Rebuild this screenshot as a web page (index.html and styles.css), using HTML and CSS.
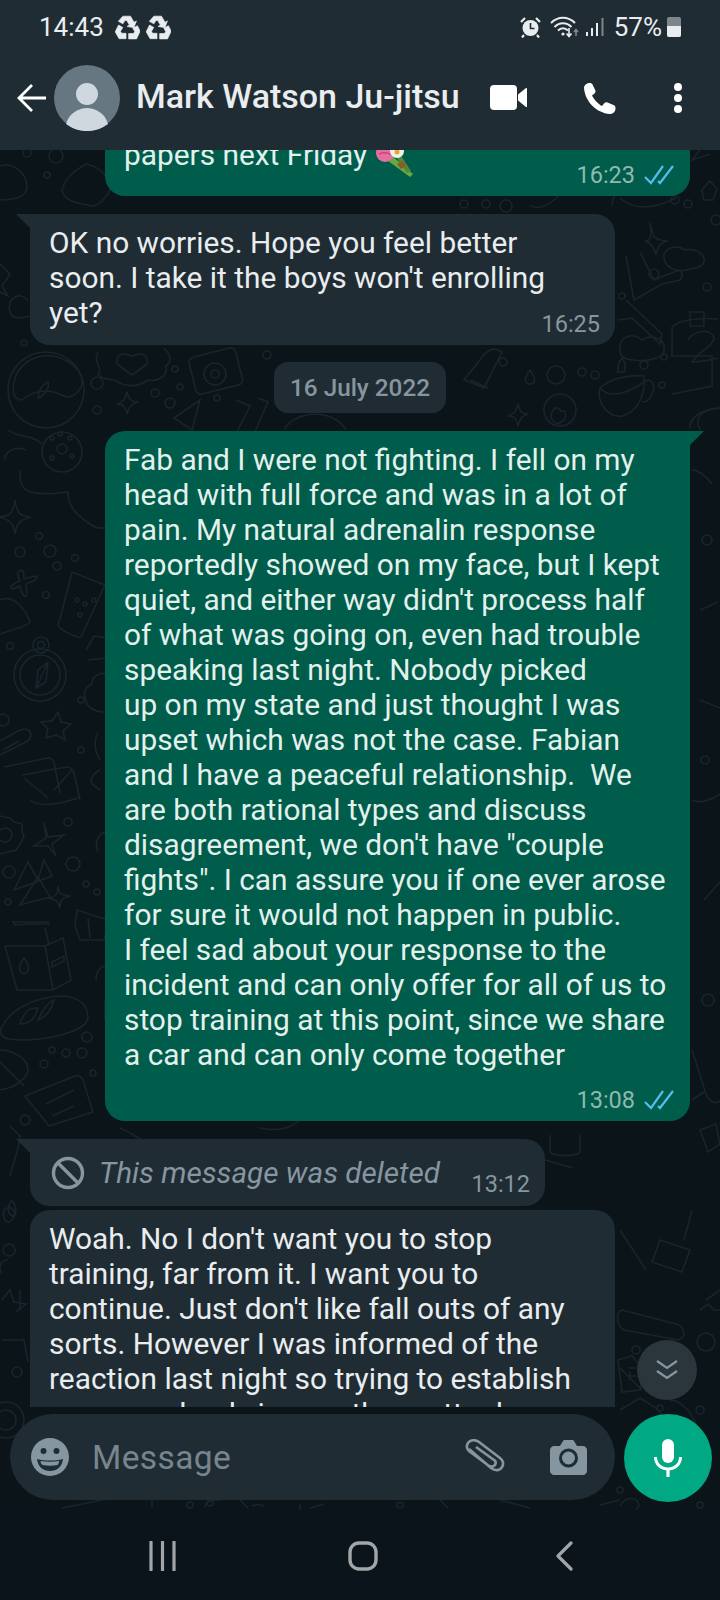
FILE: index.html
```html
<!DOCTYPE html>
<html>
<head>
    <title>Mark Watson Ju-jitsu</title>
    <link rel="stylesheet" href="styles.css">
</head>
<body>
    <svg class="sprites" width="0" height="0">
        <symbol id="recycle" viewBox="0 0 24 24">
            <path d="M8.200 2h7l3.300 5.600 2.200-1.200-2.300 6.200-6.400-1.100 2.200-1.300-2.500-4.300-1.600 0-1.900 3.200-4.200-2.400z"/>
            <path d="M4.200 10.200l3.900 2.200-2.100 3.600 1 1.800h4.100v5h-6.400l-3.400-6 0-.8z"/>
            <path d="M13.500 23v-5h4.600l1-1.800-1.700-3 4.200-2.400 2.400 4.600v.8l-3.200 6.800z"/>
        </symbol>
    </svg>

    <header class="top">
        <div class="status">
            <span class="clock">14:43</span>
            <svg class="ico-recycle"><use href="#recycle"/></svg>
            <svg class="ico-recycle"><use href="#recycle"/></svg>
            <span class="status-gap"></span>
            <svg class="ico-alarm" viewBox="0 0 21 21">
                <circle cx="10.500" cy="11" r="8" fill="#e9edef"/>
                <path d="M10.500 6v5.500h4" fill="none" stroke="#202c33" stroke-width="1.600"/>
                <path d="M1 5l4-4M20 5l-4-4M4 18l-2 2.500M17 18l2 2.500" stroke="#e9edef" stroke-width="2.200" fill="none"/>
            </svg>
            <svg class="ico-wifi" viewBox="0 0 30 22">
                <path d="M1 7c7-7 17-7 24 0M4.500 11c5-5 12-5 17 0M8 14.500c3-3 7-3 10 0" fill="none" stroke="#e9edef" stroke-width="2"/>
                <circle cx="13" cy="18" r="1.600" fill="#e9edef"/>
                <path d="M19 12v8M16.500 17.500l2.500 3 2.500-3" fill="none" stroke="#e9edef" stroke-width="1.600"/>
                <path d="M26 20v-6M24 16l2-2.500 2 2.500" fill="none" stroke="#7c868c" stroke-width="1.600"/>
            </svg>
            <svg class="ico-signal" viewBox="0 0 18 20">
                <path d="M1 15v4M6 11v8M11 6v13" stroke="#e9edef" stroke-width="2" fill="none"/>
                <path d="M16.500 1v18" stroke="#7c868c" stroke-width="2" fill="none"/>
            </svg>
            <span class="battery-text">57%</span>
            <span class="battery"><span class="battery-fill"></span></span>
        </div>
        <div class="title-bar">
            <svg class="ico-back" viewBox="0 0 30 30">
                <path d="M29 15H2M15 2L2 15l13 13" fill="none" stroke="#fff" stroke-width="2.800"/>
            </svg>
            <div class="avatar">
                <svg viewBox="0 0 66 66">
                    <circle cx="33" cy="33" r="33" fill="#667781"/>
                    <circle cx="33" cy="29" r="11" fill="#cfd8de"/>
                    <path d="M12 59c3-11 13-16 21-16s18 5 21 16c-6 4.500-13 7-21 7s-15-2.500-21-7z" fill="#cfd8de"/>
                </svg>
            </div>
            <span class="name">Mark Watson Ju-jitsu</span>
            <svg class="ico-video" viewBox="0 0 37 25">
                <rect x="0" y="0" width="27" height="25" rx="4" fill="#fff"/>
                <path d="M28 9.500l8-6.500c.5-.3 1 0 1 .6v17.800c0 .6-.5.9-1 .6l-8-6.500z" fill="#fff"/>
            </svg>
            <svg class="ico-phone" viewBox="0 0 33 32">
                <path d="M7 1c-3 0-6 2-6 5 1 13 12 25 26 26 3 0 5.500-2.500 5.500-5.500 0-2-.5-3-2-3.500l-6-2.500c-1.500-.5-2.500 0-3.500 1l-2 2.500c-4-2-8-6.500-10-10.500l2.500-2c1-1 1.200-2 .8-3.200L9.500 2.500C9 1.500 8 1 7 1z" fill="#fff"/>
            </svg>
            <div class="dots"><i></i><i></i><i></i></div>
        </div>
    </header>

    <main class="chat">
        <svg class="doodles" viewBox="0 0 720 1360">
            <g transform="translate(0,-150)">
                <!-- under header -->
                <circle cx="27" cy="153" r="4"/><circle cx="56" cy="156" r="7"/>
                <path d="M0 166c12-4 26 6 27 20 0 12-16 14-27 14"/>
                <path d="M62 190c4-14 14-20 24-26 12 2 24 12 24 26-4 8-10 14-16 16-14-2-30-4-32-16z"/>
                <circle cx="47" cy="175" r="3"/>
                <circle cx="464" cy="204" r="4"/><circle cx="486" cy="204" r="4"/><circle cx="506" cy="206" r="6"/>
                <path d="M530 205c10 8 24-4 34-14M612 205c0-6 4-12 8-16M620 198c16 14 36 10 56 0"/>
                <circle cx="675" cy="200" r="4"/><circle cx="688" cy="204" r="4"/>
                <path d="M700 150l-8 10 18-6M702 190l8-9 7 8-4 11-9 0z"/>
                <!-- left of first bubble -->
                <path d="M0 264l10 10-8 12 6 10-8-4"/>
                <path d="M28 300c-10-10-22 0-18 12 2 8 12 6 20 4"/>
                <circle cx="24" cy="343" r="3"/>
                <circle cx="46" cy="390" r="38"/>
                <path d="M14 382c4-18 20-28 38-26 16 2 30 14 30 26 0 8-10 18-18 14-16-8-30-6-42 4-8 0-10-8-8-18z"/>
                <path d="M38 398c0-6 4-14 10-16 2 6-4 14-10 16z"/>
                <circle cx="62" cy="452" r="20"/><circle cx="62" cy="449" r="5"/>
                <circle cx="52" cy="438" r="2"/><circle cx="60" cy="434" r="2"/><circle cx="70" cy="438" r="2"/><circle cx="52" cy="458" r="2"/><circle cx="72" cy="456" r="2"/>
                <path d="M8 430c10 8 24 4 34 14M4 460c2-10 12-14 22-10"/>
                <!-- heart cloud, camera, between bubbles -->
                <path d="M98 352c-6 10 6 16 0 22 6 8 18 4 20 8 10 6 22 4 30-2 10 2 20-4 18-14 8-6 2-14-2-18"/>
                <path d="M132 375l-14-10c-4-8 2-14 14-9 12-5 18 1 14 9z"/>
                <rect x="192" y="352" width="48" height="38" rx="5" transform="rotate(-14 216 372)"/>
                <circle cx="215" cy="374" r="11"/><circle cx="215" cy="374" r="4"/>
                <circle cx="175" cy="369" r="3"/><circle cx="180" cy="387" r="3"/><circle cx="97" cy="383" r="6"/>
                <circle cx="155" cy="393" r="4"/><circle cx="170" cy="403" r="5"/><circle cx="97" cy="410" r="4"/><circle cx="217" cy="398" r="3"/><circle cx="267" cy="355" r="4"/>
                <path d="M127 392c2 8 4 10 12 10-8 2-10 4-12 12-2-8-4-10-10-10 6-2 8-4 10-12z"/>
                <path d="M174 418l26-18-8 30zM236 400l14 6-14 28M258 398l10 4-14 32"/>
                <path d="M284 430c10-20 50-22 62 0"/>
                <path d="M480 360c6-10 14-14 22-8l-18 36-20-8zM470 380l18 8"/>
                <circle cx="503" cy="362" r="4"/><path d="M530 370c-6 8-6 14 0 14s6-6 0-14z"/>
                <circle cx="556" cy="375" r="9"/><circle cx="582" cy="372" r="4"/><circle cx="595" cy="375" r="4"/>
                <path d="M620 350c-2-14 14-18 22-10 8-6 24-2 22 10 0 8-16 12-30 10-8 0-14-2-14-10z"/>
                <path d="M618 372c0-8 0-8 4-14 4 6 4 8 2 14z"/>
                <path d="M600 388c8-8 26-14 44-12 2 18-6 36-22 40-14 2-26-14-22-28zM644 382c8-6 12 4 8 12-2 6-6 8-10 8"/>
                <path d="M600 388c10 12 30 4 44-6"/>
                <path d="M518 404c2 8 4 10 10 10-6 2-8 4-10 12-2-8-4-10-10-10 6-2 8-4 10-12z"/>
                <circle cx="560" cy="410" r="16"/><path d="M552 412c4-8 10-2 8 0 4-4 8 2 4 8l-6 4c-6-2-8-6-6-12z"/>
                <path d="M690 428c0-12 14-20 30-20"/>
                <!-- right of first bubble -->
                <path d="M650 223l4 14c6 4 10 4 14 4-8 2-10 4-12 14-2-8-4-10-10-14 4 0 6-4 4-18z"/>
                <path d="M664 256c0-8 14-12 20-6 8-2 22 2 20 12-2 6-10 6-18 8-10 2-22-2-22-14z"/>
                <path d="M626 256l8 44 28-16 18-4c4-6 2-12-6-8l-20 8-14-28"/>
                <path d="M626 300l36 34-2 10-28-26-14 2"/>
                <circle cx="654" cy="274" r="5"/><circle cx="707" cy="287" r="4"/><circle cx="716" cy="220" r="5"/><circle cx="622" cy="296" r="3"/>
                <path d="M672 327c6-6 24-10 46-8M672 327v30M690 312h14v14h-14z"/>
                <path d="M688 340c6-10 24-12 26-2 0 8-16 14-22 24 10 0 18-2 26-4"/>
                <path d="M672 356h40v30l-40 8"/>
                <circle cx="664" cy="357" r="3"/><circle cx="662" cy="385" r="3"/><circle cx="644" cy="365" r="4"/>
                <path d="M700 430c-6-12 0-20 20-22"/>
                <!-- left column -->
                <path d="M20 470c0 10 0 18 10 22 20 4 30 0 38 0 0 16 10 24 22 32 8 6 16 4 20 2"/>
                <path d="M15 500c2 14 5 16 16 17-11 3-14 5-16 17-2-12-5-14-16-17 11-1 14-3 16-17z"/>
                <circle cx="39" cy="536" r="3.500"/><circle cx="20" cy="552" r="5"/><circle cx="50" cy="551" r="6"/><circle cx="57" cy="566" r="4"/><circle cx="75" cy="558" r="3.500"/><circle cx="46" cy="595" r="3.500"/><circle cx="10" cy="646" r="3.500"/><circle cx="81" cy="700" r="3"/><circle cx="81" cy="750" r="3"/><circle cx="3" cy="720" r="6"/>
                <path d="M19 571c4-2 5 0 5 8 6-2 13-4 13-2s-2 4-11 7c0 6 2 10 0 12s-5-4-6-10c-4 2-8 4-9 2s2-4 9-7c-2-4-3-8-1-10z"/>
                <path d="M72 572l33 13-24 52c-2 2-18-6-22-10-2-2 0-6 1-8z"/>
                <circle cx="77" cy="600" r="2"/><circle cx="85" cy="604" r="2"/><circle cx="94" cy="600" r="2"/><circle cx="80" cy="615" r="2"/>
                <path d="M0 600c14-6 26 10 30 22-2 4-18 8-30 12"/>
                <circle cx="40" cy="675" r="26"/><circle cx="40" cy="675" r="20"/><circle cx="41" cy="645" r="8"/><circle cx="41" cy="645" r="3.500"/>
                <path d="M36 688l12-26-2 20z M36 688l2-18 10-8"/>
                <path d="M58 712l3 10 10 2-8 7 2 9-9-5-10 3 2-9-7-7 11-1z"/>
                <path d="M0 755l26-13c6-3 6-10 2-12-3-2-6-1-10 1L0 741M3 750l16-9"/>
                <path d="M4 767l44-9c3 0 6 2 6 5l6 30M22 775l44-8c4 0 7 2 8 6l6 27M24 778l24 20M72 770l-18 20"/>
                <path d="M100 770c-8 4-10 10-8 14l8 6"/>
                <path d="M86 700c-4-6 0-14 6-16 0-8 8-12 14-10M86 700c0 6 8 12 18 12"/>
                <path d="M86 650l8-14 14 2-2 20-18 2"/>
                <path d="M30 800c10 8 30 4 48-2"/>
                <!-- second left column -->
                <circle cx="5" cy="835" r="7"/>
                <path d="M0 816l10 2 4 4 8 2v8l2 4-4 8-4 6-8 2-8 2"/>
                <path d="M44 823l4 14 16-2-12 9 4 12-8-10-14 0 12-8z"/>
                <circle cx="68" cy="822" r="4"/><circle cx="73" cy="864" r="7"/><circle cx="9" cy="872" r="6"/><circle cx="8" cy="902" r="3"/><circle cx="86" cy="884" r="3"/><circle cx="97" cy="892" r="3"/>
                <path d="M28 862l10 18 6-20 8 16-38 14zM20 905l30-8-12-20z"/>
                <path d="M58 886c1 7 2 9 12 10-8 2-10 4-10 12-2-6-2-8-12-10 8-1 10-4 10-12z"/>
                <path d="M13 922l2 3 14-1h20l-1-2-30 0zM5 946l12 44 36 0 18-10-8-42-18 8-40 0zM45 927l4 18M53 990l-8-45"/>
                <path d="M24 958c-6 8-6 14 0 16 6-2 6-8 0-16zM52 962l12-6 0 5-12 6z"/>
                <path d="M77 910l-2 16 5 14 24 0 5-20-14-4zM88 918l2 20"/>
                <path d="M0 1032c6-20 30-34 60-36 20 0 28 10 28 22-2 12-30 20-60 22-14 0-26 0-28-8zM20 1024c4-12 8-16 18-16-2 8-6 16-18 16zM38 1020c4-10 8-16 16-20-2 8-6 16-16 20z"/>
                <circle cx="87" cy="1037" r="5"/><circle cx="52" cy="1050" r="3"/><circle cx="66" cy="1053" r="4"/><circle cx="82" cy="1053" r="5"/><circle cx="44" cy="1064" r="4"/><circle cx="93" cy="1073" r="3"/><circle cx="25" cy="1120" r="5"/>
                <path d="M0 1050c12 0 28 8 28 20-2 10-14 18-28 20M0 1062l24 24"/>
                <path d="M25 1096l50-20c3-1 6 0 8 4l10 32-44 14zM46 1104l28-14M52 1116l22-10"/>
                <path d="M100 760c-6-10-6-20-2-28M98 852c-4-10 0-18 8-20"/>
                <path d="M105 1000v20M96 980c0-8 4-14 10-14"/>
                <!-- right of big bubble -->
                <path d="M692 470c6 0 14 6 20 14M700 610l18-8M700 700l20 8M692 800c8 4 20 0 28-6M704 900l16-18"/>
                <circle cx="707" cy="540" r="5"/><circle cx="705" cy="760" r="4"/><circle cx="708" cy="1000" r="6"/>
                <path d="M692 1050l14 44c4 10 12 10 14 6M700 1130l16-6 4 20-12 8zM692 1100l12-8"/>
                <!-- between bubbles at the bottom -->
                <path d="M10 1126l10 10c0 10-8 30-10 40M12 1200c-6 8-4 14 0 16s6-8 0-16z"/>
                <path d="M4 1210c8-6 14 2 8 10-6 6-10-2-8-10zM8 1260c-8 0-10 8-6 14M2 1300l8-10 4 12 12 2-10 8"/>
                <circle cx="9" cy="1250" r="6"/><path d="M20 1290v20M2 1340l22 0 4 22"/>
                <circle cx="17" cy="1372" r="5"/><circle cx="6" cy="1420" r="18"/><circle cx="6" cy="1420" r="10"/>
                <path d="M120 1128c10 4 20 12 28 14M260 1128c20 4 30 0 40-8M550 1135v16c0 6 30 6 30 0v-16M545 1160l28 8"/>
                <!-- right of bottom bubbles -->
                <path d="M622 1310l54 14c8 2 12 14 2 16l-54-10c-8-4-8-18-2-20zM706 1300l14-10M620 1368l22 22M630 1372v8"/>
                <circle cx="706" cy="1342" r="9"/><circle cx="636" cy="1350" r="4"/><circle cx="660" cy="1408" r="3"/><circle cx="700" cy="1410" r="4"/>
                <path d="M618 1360l14-4 12 14-4 20-18 2zM628 1368h8M628 1376h8"/>
                <path d="M700 1310l8-6 6 6 6 0M620 1230l26 40M660 1240l30 10-8 22-30-10zM692 1210l-8 30"/>
                <path d="M620 1410l20-12 16 10 12 14-2 14"/>
                <path d="M670 1400c10 0 20 10 26 24"/>
                <!-- under composer -->
                <path d="M62 1508l60-12h20M205 1508c0-6 4-8 12-8l64-6M152 1500v8M252 1506c6-2 8-2 12 0M310 1508l14-4M240 1500l8 8M300 1504v6"/>
                <circle cx="190" cy="1505" r="3"/><circle cx="210" cy="1503" r="3"/><circle cx="400" cy="1505" r="3"/>
                <path d="M440 1500l8 8M500 1500l30 8M600 1505l20-5M620 1506c4-8 14-10 18-4 2 4 0 6-2 8"/>
                <circle cx="620" cy="1490" r="3"/><circle cx="700" cy="1505" r="3"/>
            </g>
        </svg>

        <div class="messages">
            <div class="bubble out first">
                <div class="text">papers next Friday <svg class="bouquet" viewBox="0 0 40 40">
                    <path d="M9 20l6-4 23 20-3 3z" fill="#6aa53f"/>
                    <path d="M18 14l5-1 13 20-4 2z" fill="#4f8a34"/>
                    <path d="M22 26l6-3 3 5-5 3z" fill="#8a5a2c"/>
                    <ellipse cx="10" cy="15" rx="9" ry="9" fill="#e66f9f"/>
                    <path d="M4 16c4-2 8-2 13 1" stroke="#c9477f" stroke-width="1.500" fill="none"/>
                    <circle cx="22" cy="13" r="7" fill="#f1f1ea"/>
                    <circle cx="22" cy="14" r="2.500" fill="#e6a53a"/>
                </svg></div>
                <div class="meta"><span class="time">16:23</span><svg class="ticks" viewBox="0 0 30 22"><path d="M1 13l6 6L19 2M14 17l2 2L29 2" fill="none" stroke="#53bdeb" stroke-width="2.200"/></svg></div>
            </div>

            <div class="bubble in tail">
                <div class="text">OK no worries. Hope you feel better<br>soon. I take it the boys won't enrolling<br>yet?</div>
                <div class="meta meta-in"><span class="time">16:25</span></div>
            </div>

            <div class="date">16 July 2022</div>

            <div class="bubble out tail big">
                <div class="text">Fab and I were not fighting. I fell on my<br>head with full force and was in a lot of<br>pain. My natural adrenalin response<br>reportedly showed on my face, but I kept<br>quiet, and either way didn't process half<br>of what was going on, even had trouble<br>speaking last night. Nobody picked<br>up on my state and just thought I was<br>upset which was not the case. Fabian<br>and I have a peaceful relationship.&nbsp; We<br>are both rational types and discuss<br>disagreement, we don't have "couple<br>fights". I can assure you if one ever arose<br>for sure it would not happen in public.<br>I feel sad about your response to the<br>incident and can only offer for all of us to<br>stop training at this point, since we share<br>a car and can only come together</div>
                <div class="meta"><span class="time">13:08</span><svg class="ticks" viewBox="0 0 30 22"><path d="M1 13l6 6L19 2M14 17l2 2L29 2" fill="none" stroke="#53bdeb" stroke-width="2.200"/></svg></div>
            </div>

            <div class="bubble in tail deleted">
                <svg class="ico-deleted" viewBox="0 0 34 34">
                    <circle cx="17" cy="17" r="14.500" fill="none" stroke="#8696a0" stroke-width="3.400"/>
                    <path d="M7 7l20 20" stroke="#8696a0" stroke-width="3.400"/>
                </svg>
                <span class="deleted-text">This message was deleted</span>
                <span class="time">13:12</span>
            </div>

            <div class="bubble in cut">
                <div class="text">Woah. No I don't want you to stop<br>training, far from it. I want you to<br>continue. Just don't like fall outs of any<br>sorts. However I was informed of the<br>reaction last night so trying to establish<br>a more valued view on the matter here</div>
            </div>
        </div>

        <div class="to-bottom">
            <svg viewBox="0 0 24 22"><path d="M2 2l10 7 10-7M2 12l10 7 10-7" fill="none" stroke="#8696a0" stroke-width="2.200"/></svg>
        </div>

        <div class="composer">
            <div class="input">
                <svg class="ico-smile" viewBox="0 0 38 38">
                    <circle cx="19" cy="19" r="19" fill="#8696a0"/>
                    <circle cx="12.500" cy="13" r="3" fill="#202c33"/>
                    <circle cx="25.500" cy="13" r="3" fill="#202c33"/>
                    <path d="M6 21c8 2 18 2 26 0-1 8-6 12-13 12S7 29 6 21z" fill="#202c33"/>
                    <path d="M9.500 23c6 1 13 1 19 0-1 2-1 3-2 4-5 1-10 1-15 0-1-1-2-2-2-4z" fill="#8696a0"/>
                </svg>
                <span class="placeholder">Message</span>
                <svg class="ico-clip" viewBox="0 0 40 36">
                    <path d="M4 9l22 19c4 3 9 3 11-1 2-3 1-7-2-9L14 2C10-1 5 0 3 3c-2 3-1 6 1 8l20 15c2 1 4 1 6-1 1-2 1-4-1-5L11 7" fill="none" stroke="#8696a0" stroke-width="2.600" transform="translate(0 1)"/>
                </svg>
                <svg class="ico-camera" viewBox="0 0 37 36">
                    <path d="M4 7h6l3-5c.5-.6 1-1 2-1h7c1 0 1.500.4 2 1l3 5h6c2 0 4 2 4 4v21c0 2-2 4-4 4H4c-2 0-4-2-4-4V11c0-2 2-4 4-4z" fill="#8696a0"/>
                    <circle cx="18.500" cy="19" r="8" fill="#8696a0" stroke="#202c33" stroke-width="3"/>
                </svg>
            </div>
            <div class="mic">
                <svg viewBox="0 0 28 38">
                    <rect x="8" y="0" width="12" height="24" rx="6" fill="#fff"/>
                    <path d="M1.500 18c0 7 5.500 12 12.500 12s12.500-5 12.500-12" fill="none" stroke="#fff" stroke-width="3"/>
                    <path d="M14 29v9" stroke="#fff" stroke-width="3.200"/>
                </svg>
            </div>
        </div>
    </main>

    <nav class="nav">
        <svg class="nav-recent" viewBox="0 0 27 30"><path d="M2 1v28M13.500 1v28M25 1v28" stroke="#a3a6a8" stroke-width="3.200" stroke-linecap="round"/></svg>
        <svg class="nav-home" viewBox="0 0 30 30"><rect x="2" y="2" width="26" height="26" rx="9" fill="none" stroke="#a3a6a8" stroke-width="3.400"/></svg>
        <svg class="nav-back" viewBox="0 0 18 30"><path d="M16 2L3 15l13 13" fill="none" stroke="#a3a6a8" stroke-width="3.200" stroke-linecap="round" stroke-linejoin="round"/></svg>
    </nav>
</body>
</html>
```

FILE: styles.css
```css
*{padding: 0;margin: 0;box-sizing: border-box;}
html,body{
    width: 720px;
    height: 1600px;
    overflow: hidden;
}
body{
    display: flex;
    flex-direction: column;
    background: #0b141a;
    color: #e9edef;
    font-family: Roboto, "Noto Sans", sans-serif;
}
.sprites{display: block;}

/* header */
.top{
    height: 150px;
    flex: none;
    background: #202c33;
}
.status{
    height: 54px;
    display: flex;
    align-items: center;
    padding: 0 39px 0 39px;
}
.clock{
    font-size: 26px;
    color: #e9edef;
    margin-right: 10px;
}
.ico-recycle{
    width: 26px;
    height: 26px;
    margin-right: 5px;
    fill: #e9edef;
    stroke: #e9edef;
    stroke-width: .6;
}
.status-gap{flex: 1;}
.ico-alarm{width: 21px;height: 21px;margin-right: 9px;}
.ico-wifi{width: 30px;height: 22px;margin-right: 6px;}
.ico-signal{width: 18px;height: 20px;margin-right: 10px;}
.battery-text{font-size: 26px;}
.battery{
    width: 14px;
    height: 20px;
    margin-left: 5px;
    border-radius: 2px;
    background: #7c868c;
    display: flex;
    align-items: flex-end;
    overflow: hidden;
}
.battery-fill{
    display: block;
    width: 100%;
    height: 11px;
    background: #e9edef;
}
.title-bar{
    height: 96px;
    display: flex;
    align-items: center;
    padding: 0 0 9px 17px;
}
.ico-back{width: 30px;height: 30px;margin-right: 7px;}
.avatar{width: 66px;height: 66px;margin-right: 16px;}
.avatar svg{display: block;width: 66px;height: 66px;}
.name{
    font-size: 34px;
    font-weight: 500;
    width: 354px;
    margin-bottom: 3px;
    white-space: nowrap;
}
.ico-video{width: 37px;height: 25px;margin-right: 56px;}
.ico-phone{width: 33px;height: 32px;margin-right: 58px;}
.dots{
    display: flex;
    flex-direction: column;
    gap: 3px;
}
.dots i{
    display: block;
    width: 8px;
    height: 8px;
    border-radius: 50%;
    background: #fff;
}

/* chat */
.chat{
    position: relative;
    height: 1360px;
    flex: none;
    display: flex;
    flex-direction: column;
    background: #0a1419;
    overflow: hidden;
}
.doodles{
    position: absolute;
    left: 0;
    top: 0;
    width: 720px;
    height: 1360px;
    fill: none;
    stroke: #19252b;
    stroke-width: 1.6;
}
.messages{
    position: relative;
    height: 1262px;
    flex: none;
    overflow: hidden;
    display: flex;
    flex-direction: column;
    padding: 0 30px;
}
.bubble{
    position: relative;
    width: 585px;
    flex: none;
    padding: 11px 15px 7px 19px;
    border-radius: 20px;
    font-size: 29.850px;
    line-height: 35px;
    white-space: nowrap;
}
.bubble.in{
    background: #202c33;
    align-self: flex-start;
}
.bubble.out{
    background: #005c4b;
    align-self: flex-end;
    color: #e3f1ec;
}
.bubble.tail:before{
    content: '';
    position: absolute;
    top: 0;
    width: 16px;
    height: 16px;
}
.bubble.in.tail:before{
    left: -14px;
    background: #202c33;
    clip-path: polygon(0 0, 100% 0, 100% 100%);
}
.bubble.out.tail:before{
    right: -14px;
    background: #005c4b;
    clip-path: polygon(0 0, 100% 0, 0 100%);
}
.first{margin-top: -24px;margin-bottom: 18px;}
.bubble.in.tail{margin-bottom: 17px;border-top-left-radius: 0;}
.bubble.out.tail{border-top-right-radius: 0;}
.bubble.big{margin-bottom: 18px;}
.meta{
    height: 28px;
    margin-top: -16px;
    padding-right: 1px;
    display: flex;
    justify-content: flex-end;
    align-items: center;
    gap: 9px;
}
.big .meta{margin-top: 14px;}
.meta-in{margin-top: -20px;padding-right: 0;}
.time{
    font-size: 23.500px;
    line-height: 28px;
    color: #8fb9af;
}
.in .time{color: #8696a0;}
.ticks{width: 30px;height: 22px;}
.bouquet{
    width: 40px;
    height: 40px;
    margin: -5px 0 -1px 0;
    vertical-align: -12px;
}
.date{
    align-self: center;
    height: 51px;
    width: 172px;
    flex: none;
    margin-bottom: 18px;
    border-radius: 14px;
    background: #202c33;
    color: #8696a0;
    font-size: 24.300px;
    font-weight: 500;
    line-height: 51px;
    text-align: center;
}
.bubble.in.deleted{
    width: 515px;
    height: 67px;
    margin-bottom: 4px;
    padding: 0 15px 0 21px;
    display: flex;
    align-items: center;
}
.ico-deleted{width: 34px;height: 34px;flex: none;margin-right: 14px;}
.deleted-text{
    font-style: italic;
    color: #8696a0;
    font-size: 29.700px;
    flex: 1;
}
.deleted .time{align-self: flex-end;margin-bottom: 8px;}
.bubble.cut{
    height: 197px;
    border-radius: 20px 20px 0 0;
    overflow: hidden;
}

/* scroll to bottom, over the messages */
.to-bottom{
    position: absolute;
    left: 637px;
    top: 1190px;
    width: 60px;
    height: 60px;
    border-radius: 50%;
    background: #2a363c;
    display: flex;
    align-items: center;
    justify-content: center;
}
.to-bottom svg{width: 24px;height: 22px;}

/* composer */
.composer{
    position: relative;
    display: flex;
    align-items: flex-start;
    margin-top: 2px;
    padding: 0 8px 0 10px;
    gap: 9px;
}
.input{
    width: 605px;
    height: 86px;
    border-radius: 43px;
    background: #202c33;
    display: flex;
    align-items: center;
    padding: 0 28px 0 21px;
}
.ico-smile{width: 38px;height: 38px;flex: none;margin-right: 23px;}
.placeholder{
    flex: 1;
    font-size: 33.500px;
    color: #76858e;
    letter-spacing: .4px;
}
.ico-clip{width: 40px;height: 36px;margin-right: 45px;}
.ico-camera{width: 37px;height: 36px;}
.mic{
    width: 88px;
    height: 88px;
    flex: none;
    border-radius: 50%;
    background: #00a884;
    display: flex;
    align-items: center;
    justify-content: center;
}
.mic svg{width: 28px;height: 38px;}

/* system nav */
.nav{
    position: relative;
    height: 90px;
    flex: none;
    background: #0b141a;
    display: flex;
    align-items: center;
    padding: 2px 0 0 149px;
}
.nav-recent{width: 27px;height: 30px;margin-right: 172px;}
.nav-home{width: 30px;height: 30px;margin-right: 177px;}
.nav-back{width: 18px;height: 30px;}
```
